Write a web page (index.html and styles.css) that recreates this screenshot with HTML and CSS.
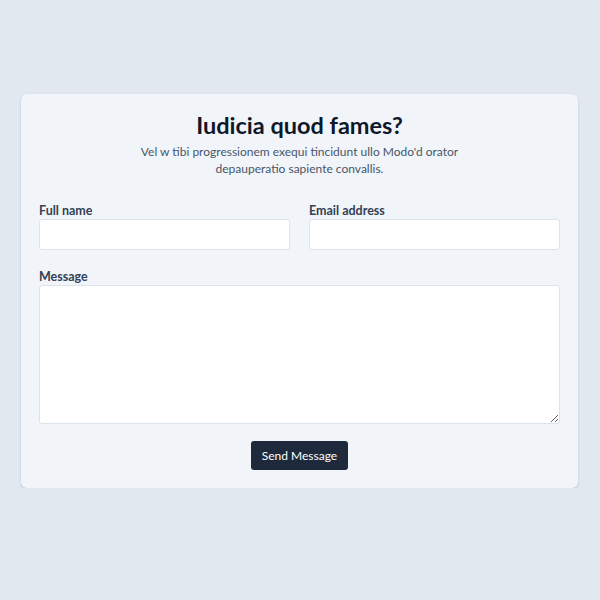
FILE: index.html
```html
<!DOCTYPE html>
<html lang="en">
<head>
<meta charset="utf-8">
<link rel="stylesheet" href="styles.css">
</head>
<body>
<main class="page">
  <form class="card">
    <h1 class="title">Iudicia quod fames?</h1>
    <p class="subtitle">Vel w tibi progressionem exequi tincidunt ullo Modo'd orator depauperatio sapiente convallis.</p>
    <div class="row">
      <div class="field">
        <label class="label">Full name</label>
        <input class="input" type="text">
      </div>
      <div class="field">
        <label class="label">Email address</label>
        <input class="input" type="email">
      </div>
    </div>
    <div class="field message">
      <label class="label">Message</label>
      <textarea class="textarea"></textarea>
    </div>
    <div class="actions">
      <button class="button" type="button">Send Message</button>
    </div>
  </form>
</main>
</body>
</html>
```
FILE: styles.css
```css
html, body {
  margin: 0;
  padding: 0;
  background: #e2e8f0;
  font-family: Lato, "Noto Sans", sans-serif;
}
.page {
  padding: 94px 22px 0 21px;
}
.card {
  background: #f1f5f9;
  border-radius: 6px;
  box-shadow: 0 1px 3px rgba(15, 23, 42, 0.12), 0 1px 2px rgba(15, 23, 42, 0.06);
  padding: 17px 18px 18px 18px;
  display: flex;
  flex-direction: column;
}
.title {
  margin: 0;
  text-align: center;
  font-size: 23.5px;
  line-height: 29px;
  font-weight: 700;
  color: #0f172a;
}
.subtitle {
  margin: 3px auto 0;
  max-width: 322px;
  text-align: center;
  font-size: 12px;
  line-height: 17px;
  color: #475569;
}
.row {
  margin-top: 26px;
  display: grid;
  grid-template-columns: 1fr 1fr;
  gap: 19px;
}
.field {
  display: flex;
  flex-direction: column;
  gap: 0;
}
.message {
  margin-top: 19px;
}
.label {
  font-size: 12.5px;
  line-height: 16px;
  font-weight: 700;
  color: #334155;
}
.input, .textarea {
  box-sizing: border-box;
  background: #ffffff;
  border: 1px solid #dbe3ec;
  border-radius: 3px;
  margin: 0;
  font-family: inherit;
}
.input {
  height: 31px;
}
.textarea {
  height: 139px;
  resize: vertical;
}
.actions {
  margin-top: 17px;
  display: flex;
  justify-content: center;
}
.button {
  background: #1e293b;
  color: #ffffff;
  border: none;
  border-radius: 3px;
  height: 29px;
  padding: 0 11px;
  font-family: inherit;
  font-size: 12px;
}
```
